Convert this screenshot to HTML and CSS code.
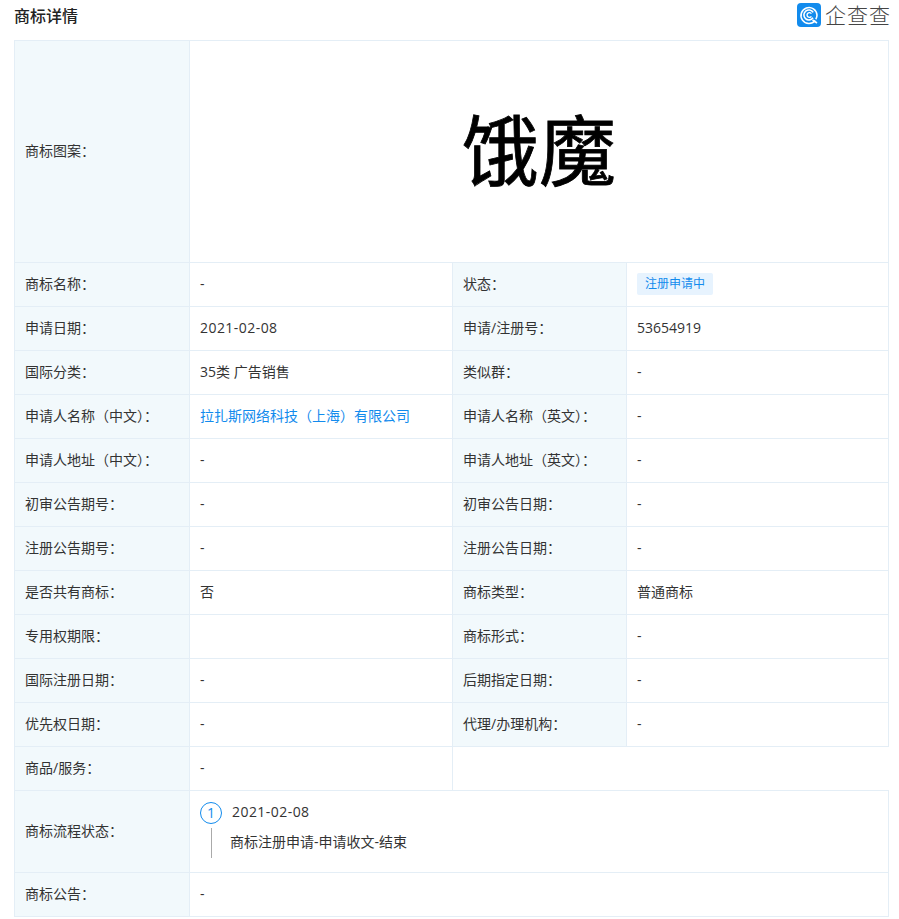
FILE: index.html
```html
<!DOCTYPE html>
<html lang="zh-CN">
<head>
<meta charset="utf-8">
<title>商标详情</title>
<link rel="stylesheet" href="styles.css">
</head>
<body>
<header class="head">
  <h1 class="title">商标详情</h1>
  <div class="logo">
    <svg class="logo-mark" width="24" height="24" viewBox="0 0 24 24">
      <rect width="24" height="24" rx="4" fill="#128bed"/>
      <path d="M18.2 17.6A8 8 0 1 1 20 12c0 1.6-.4 3-1.2 4.2" fill="none" stroke="#fff" stroke-width="1.6"/>
      <path d="M16.2 9.4a5 5 0 1 0-.2 5.4" fill="none" stroke="#fff" stroke-width="1.6"/>
      <path d="M14.4 10.6a2.4 2.4 0 1 0 0 2.8" fill="none" stroke="#fff" stroke-width="1.4"/>
      <path d="M15.5 17l4.5 3" stroke="#fff" stroke-width="1.6"/>
    </svg>
    <span class="logo-text">企查查</span>
  </div>
</header>
<table class="detail">
  <colgroup><col class="c-l"><col class="c-v"><col class="c-m"><col class="c-w"></colgroup>
  <tbody>
    <tr class="r-pic"><th>商标图案：</th><td colspan="3" class="pic"><span class="mark">饿魔</span></td></tr>
    <tr><th>商标名称：</th><td>-</td><th>状态：</th><td><span class="tag">注册申请中</span></td></tr>
    <tr><th>申请日期：</th><td class="wide">2021-02-08</td><th>申请/注册号：</th><td>53654919</td></tr>
    <tr><th>国际分类：</th><td>35类 广告销售</td><th>类似群：</th><td>-</td></tr>
    <tr><th>申请人名称（中文）：</th><td><a class="link" href="#">拉扎斯网络科技（上海）有限公司</a></td><th>申请人名称（英文）：</th><td>-</td></tr>
    <tr><th>申请人地址（中文）：</th><td>-</td><th>申请人地址（英文）：</th><td>-</td></tr>
    <tr><th>初审公告期号：</th><td>-</td><th>初审公告日期：</th><td>-</td></tr>
    <tr><th>注册公告期号：</th><td>-</td><th>注册公告日期：</th><td>-</td></tr>
    <tr><th>是否共有商标：</th><td>否</td><th>商标类型：</th><td>普通商标</td></tr>
    <tr><th>专用权期限：</th><td></td><th>商标形式：</th><td>-</td></tr>
    <tr><th>国际注册日期：</th><td>-</td><th>后期指定日期：</th><td>-</td></tr>
    <tr><th>优先权日期：</th><td>-</td><th>代理/办理机构：</th><td>-</td></tr>
    <tr><th>商品/服务：</th><td>-</td></tr>
    <tr class="r-flow"><th>商标流程状态：</th><td colspan="3" class="flow">
      <div class="step">
        <div class="rail"><span class="num">1</span><span class="line"></span></div>
        <div class="body"><div class="date wide">2021-02-08</div><div class="desc">商标注册申请-申请收文-结束</div></div>
      </div>
    </td></tr>
    <tr><th>商标公告：</th><td colspan="3">-</td></tr>
  </tbody>
</table>
</body>
</html>
```

FILE: styles.css
```css
* { box-sizing: border-box; }
html, body { margin: 0; padding: 0; background: #fff; }
body {
  font-family: "Open Sans", "Noto Sans CJK SC", sans-serif;
  font-size: 14px;
  color: #333;
}
.head {
  display: flex;
  justify-content: space-between;
  align-items: flex-start;
  height: 40px;
  padding: 3px 8px 0 14px;
}
.title {
  margin: 2px 0 0;
  font-size: 16px;
  line-height: 22px;
  font-weight: 500;
  color: #222;
}
.logo { display: flex; align-items: center; height: 24px; gap: 4px; }
.logo-mark { display: block; }
.logo-text {
  font-size: 21px;
  line-height: 24px;
  letter-spacing: 1px;
  font-weight: 300;
  color: #444;
}
.detail {
  border-collapse: collapse;
  table-layout: fixed;
  width: 875px;
  margin-left: 14px;
}
.c-l { width: 175px; }
.c-v { width: 263px; }
.c-m { width: 174px; }
.c-w { width: 262px; }
.detail tr { height: 44px; }
.detail .r-pic { height: 222px; }
.detail .r-flow { height: 82px; }
.detail th, .detail td {
  border: 1px solid #e4eef6;
  padding: 0 10px 2px;
  vertical-align: middle;
  text-align: left;
  font-weight: 400;
  line-height: 20px;
}
.detail th { background: #f2f9fc; color: #333; font-size: 14px; }
.detail td.pic { text-align: center; padding: 0 0 10px; }
.detail td.flow { padding-bottom: 3px; }
.mark {
  font-size: 77px;
  line-height: 90px;
  font-weight: 400;
  -webkit-text-stroke: 0.8px #000;
  color: #000;
  font-family: "Noto Sans CJK SC", sans-serif;
}
.tag {
  display: inline-block;
  height: 22px;
  line-height: 22px;
  padding: 0 8px;
  border-radius: 2px;
  font-size: 12px;
  color: #128bed;
  background: #e7f3fe;
  vertical-align: middle;
}
.link { color: #128bed; text-decoration: none; }
.wide { letter-spacing: .45px; }
.step { display: flex; gap: 8px; }
.rail {
  display: flex;
  flex-direction: column;
  align-items: center;
  width: 22px;
}
.num {
  width: 22px;
  height: 22px;
  border: 1px solid #128bed;
  border-radius: 50%;
  color: #128bed;
  font-size: 14px;
  line-height: 20px;
  text-align: center;
}
.line { width: 1px; height: 30px; margin-top: 4px; background: #aaa; }
.date { line-height: 20px; margin-left: 2px; }
.desc { margin-top: 10px; line-height: 20px; }
```
